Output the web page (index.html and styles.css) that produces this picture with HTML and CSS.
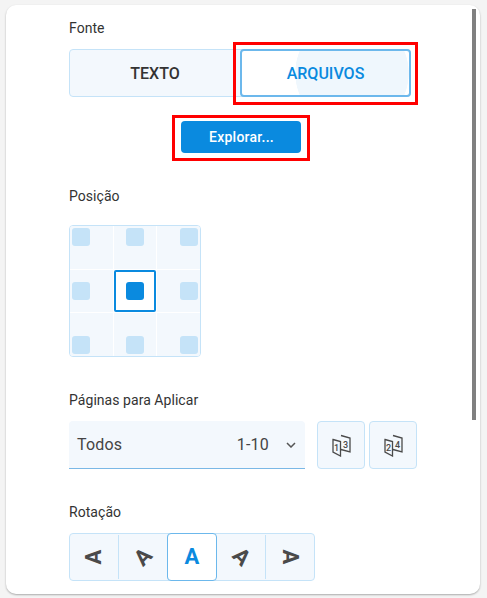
FILE: index.html
```html
<!DOCTYPE html>
<html lang="pt">
<head>
  <meta charset="UTF-8" />
  <meta name="viewport" content="width=device-width, initial-scale=1.0"/>
  <title>Fonte</title>
  <link rel="stylesheet" href="styles.css">
</head>
<body>
  <div class="card">
    <div class="content">
      <!-- Fonte -->
      <div class="label label-first">Fonte</div>
      <div class="source-row">
        <button class="source-btn">TEXTO</button>
        <div class="mark-source">
          <button class="source-btn source-active">ARQUIVOS</button>
        </div>
      </div>
      <div class="browse-row">
        <div class="mark-browse">
          <button class="browse-btn">Explorar...</button>
        </div>
      </div>

      <!-- Posicao -->
      <div class="label label-pos">Posição</div>
      <div class="pos-grid">
        <div class="pos-cell start-start"><span class="dot"></span></div>
        <div class="pos-cell center-start"><span class="dot"></span></div>
        <div class="pos-cell end-start"><span class="dot"></span></div>
        <div class="pos-cell start-center"><span class="dot"></span></div>
        <div class="pos-cell center-center pos-active"><span class="dot dot-active"></span></div>
        <div class="pos-cell end-center"><span class="dot"></span></div>
        <div class="pos-cell start-end"><span class="dot"></span></div>
        <div class="pos-cell center-end"><span class="dot"></span></div>
        <div class="pos-cell end-end"><span class="dot"></span></div>
      </div>

      <!-- Paginas -->
      <div class="label label-pages">Páginas para Aplicar</div>
      <div class="pages-row">
        <div class="select">
          <span class="select-name">Todos</span>
          <span class="select-range">1-10</span>
          <svg class="chevron" width="10" height="6" viewBox="0 0 10 6"><path d="M1 1l4 4 4-4" fill="none" stroke="#555" stroke-width="1.5"/></svg>
        </div>
        <button class="page-btn">
          <svg width="24" height="24" viewBox="0 0 24 24">
            <path d="M4 6.500l7.500 2v14.500l-7.500 -4z M12 2.500l9 2.500v14l-9 -2.500" fill="none" stroke="#4a4a4a" stroke-width="1.300"/>
            <text x="7.500" y="18" class="page-num">1</text>
            <text x="16.500" y="14.500" class="page-num">3</text>
          </svg>
        </button>
        <button class="page-btn">
          <svg width="24" height="24" viewBox="0 0 24 24">
            <path d="M4 6.500l7.500 2v14.500l-7.500 -4z M12 2.500l9 2.500v14l-9 -2.500" fill="none" stroke="#4a4a4a" stroke-width="1.300"/>
            <text x="7.500" y="18" class="page-num">2</text>
            <text x="16.500" y="14.500" class="page-num">4</text>
          </svg>
        </button>
      </div>

      <!-- Rotacao -->
      <div class="label label-rot">Rotação</div>
      <div class="rot-row">
        <button class="rot-btn"><span class="rot-a rot-l90">A</span></button>
        <button class="rot-btn"><span class="rot-a rot-l45">A</span></button>
        <button class="rot-btn rot-active"><span class="rot-a">A</span></button>
        <button class="rot-btn"><span class="rot-a rot-r45">A</span></button>
        <button class="rot-btn"><span class="rot-a rot-r90">A</span></button>
      </div>
    </div>
    <div class="scrollbar"></div>
  </div>
</body>
</html>
```

FILE: styles.css
```css
html, body {
  height: 100%;
}
body {
  font-family: Roboto, "Liberation Sans", sans-serif;
  background: #f4f4f4;
  margin: 0;
  padding: 5px 7px 4px 6px;
  box-sizing: border-box;
  overflow: hidden;
  color: #333;
}
button {
  font-family: inherit;
  margin: 0;
  padding: 0;
  cursor: pointer;
}
.card {
  position: relative;
  height: 100%;
  background: white;
  border-radius: 10px;
  box-shadow: 0 1px 2px rgba(0,0,0,0.3);
  overflow: hidden;
}
.content {
  padding-left: 63px;
}
.scrollbar {
  position: absolute;
  top: 4px;
  left: 466px;
  width: 4px;
  height: 411px;
  background: #808080;
}
.label {
  font-size: 14px;
  line-height: 20px;
  letter-spacing: 0.05px;
  color: #333;
}
.label-first { padding-top: 13px; }
.label-pos { margin-top: 25px; }
.label-pages { margin-top: 33px; }
.label-rot { margin-top: 33px; }

/* Fonte */
.source-row {
  display: flex;
  width: 342px;
  height: 48px;
  margin-top: 11px;
  background: #f3f8fd;
  border: 1px solid #c5e3f8;
  border-radius: 4px;
  box-sizing: border-box;
}
.source-btn {
  flex: 1;
  border: none;
  background: none;
  font-size: 16px;
  font-weight: 500;
  color: #333;
}
.mark-source {
  position: relative;
  width: 171px;
  height: 48px;
  margin: -1px -1px -1px 0;
}
.mark-source::after {
  content: "";
  position: absolute;
  top: -7px;
  left: -7px;
  right: -7px;
  bottom: -8px;
  border: 3px solid #f00;
}
.source-active {
  display: block;
  width: 100%;
  height: 100%;
  border: 2px solid #6cb8ec;
  border-radius: 4px;
  color: #0a8adf;
  background: radial-gradient(circle 57px at 110px 22px, #eff7fd 99%, white 100%);
}
.browse-row {
  display: flex;
  justify-content: center;
  width: 344px;
  margin-top: 18px;
}
.mark-browse {
  padding: 3px 6px 5px;
  border: 3px solid #f00;
}
.browse-btn {
  display: block;
  width: 120px;
  height: 32px;
  padding-left: 1px;
  border: none;
  border-radius: 4px;
  background: #0a8adf;
  color: white;
  font-size: 14px;
  font-weight: 500;
  letter-spacing: 0.25px;
}

/* Posicao */
.pos-grid {
  display: grid;
  grid-template-columns: 43px 42px 43px;
  grid-template-rows: 43px 42px 43px;
  gap: 1px;
  width: 132px;
  height: 132px;
  margin-top: 19px;
  background: white;
  border: 1px solid #c5e3f8;
  border-radius: 4px;
  box-sizing: border-box;
  overflow: hidden;
}
.pos-cell {
  display: flex;
  padding: 2px;
  background: #f3f8fd;
  box-sizing: border-box;
}
.pos-active {
  background: white;
  outline: 2px solid #0a8adf;
  outline-offset: -2px;
  border-radius: 2px;
}
.start-start { justify-content: flex-start; align-items: flex-start; }
.center-start { justify-content: center; align-items: flex-start; }
.end-start { justify-content: flex-end; align-items: flex-start; }
.start-center { justify-content: flex-start; align-items: center; }
.center-center { justify-content: center; align-items: center; }
.end-center { justify-content: flex-end; align-items: center; }
.start-end { justify-content: flex-start; align-items: flex-end; }
.center-end { justify-content: center; align-items: flex-end; }
.end-end { justify-content: flex-end; align-items: flex-end; }
.dot {
  width: 18px;
  height: 18px;
  background: #c5e3f8;
  border-radius: 3px;
}
.dot-active {
  background: #0a8adf;
}

/* Paginas */
.pages-row {
  display: flex;
  gap: 4px;
  margin-top: 11px;
}
.select {
  display: flex;
  align-items: center;
  width: 236px;
  height: 48px;
  margin-right: 8px;
  padding: 0 9px 0 8px;
  background: #f3f8fd;
  border-bottom: 1px solid #7ab8e6;
  border-radius: 4px 4px 0 0;
  box-sizing: border-box;
  font-size: 16px;
  letter-spacing: 0.2px;
  color: #444;
}
.select-name {
  flex: 1;
}
.select-range {
  margin-right: 17px;
}
.page-btn {
  display: flex;
  align-items: center;
  justify-content: center;
  width: 48px;
  height: 48px;
  background: #f3f8fd;
  border: 1px solid #c5e3f8;
  border-radius: 4px;
}
.page-num {
  font-size: 9px;
  font-weight: 500;
  font-family: Roboto, sans-serif;
  text-anchor: middle;
  fill: #4a4a4a;
}

/* Rotacao */
.rot-row {
  display: flex;
  width: 246px;
  height: 48px;
  margin-top: 11px;
  background: #f3f8fd;
  border: 1px solid #c5e3f8;
  border-radius: 4px;
  box-sizing: border-box;
}
.rot-btn {
  flex: 1;
  display: flex;
  align-items: center;
  justify-content: center;
  background: none;
  border: none;
  border-right: 1px solid #c5e3f8;
  margin: 1px 0;
  font-size: 22px;
  font-weight: 700;
  color: #4a4a4a;
}
.rot-btn:last-child {
  border-right: none;
}
.rot-active {
  margin: -1px 0 -1px -1px;
  background: white;
  border: 1px solid #6cb8ec;
  border-radius: 4px;
  color: #0a8adf;
}
.rot-a {
  display: block;
  line-height: 1;
}
.rot-l90 { transform: rotate(-90deg); }
.rot-l45 { transform: rotate(-45deg); }
.rot-r45 { transform: rotate(45deg); }
.rot-r90 { transform: rotate(90deg); }
```
